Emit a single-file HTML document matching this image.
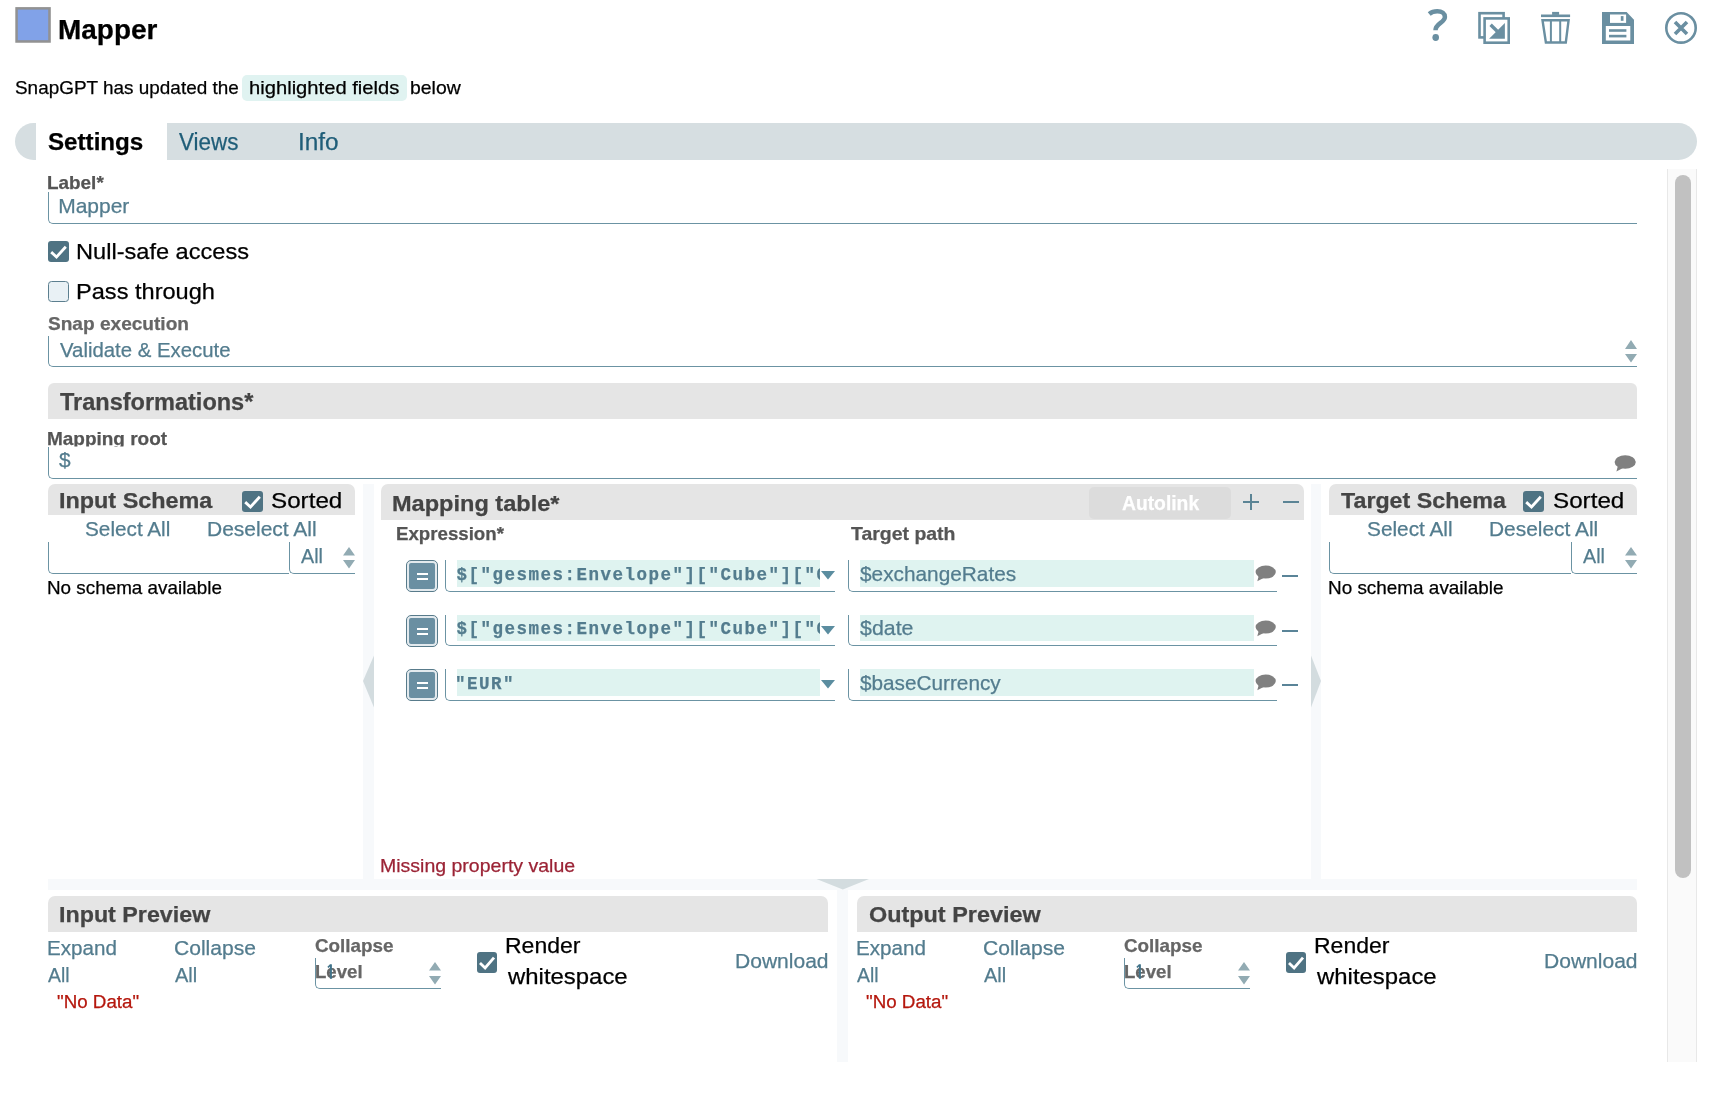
<!DOCTYPE html>
<html lang="en"><head><meta charset="utf-8"><title>Mapper</title>
<style>
html,body{margin:0;padding:0;}
body{width:1714px;height:1104px;position:relative;overflow:hidden;background:#fff;font-family:"Liberation Sans",sans-serif;color:#000;}
#app{position:absolute;left:0;top:0;width:1714px;height:1104px;will-change:transform;}
.a{position:absolute;box-sizing:border-box;}
.t{position:absolute;white-space:nowrap;font-family:"Liberation Sans",sans-serif;transform-origin:0 0;-webkit-text-stroke:0.25px;}
.bar{background:#e5e5e5;}
.inp{border-left:1px solid #6b93a3;border-bottom:1px solid #6b93a3;border-bottom-left-radius:5px;}
.hl{background:#dff3f0;}
.gut{background:#f7f9fb;}
.cb{background:#4f7383;border-radius:3px;}
.cbo{background:#e9f1f5;border:1px solid #5c7f8f;border-radius:3.5px;}
.mono{font-family:"Liberation Mono",monospace;font-weight:700;font-size:20px;line-height:20px;color:#5b8294;white-space:pre;overflow:hidden;}
.eq{border:1px solid #587b8b;border-radius:5px;background:#e3eaee;}
.eq i{position:absolute;left:2px;top:2px;right:2px;bottom:2px;background:#6a8fa2;border-radius:2px;}
.eq b{position:absolute;left:10px;width:11px;height:2px;background:#fff;}
svg{position:absolute;overflow:visible;}

</style></head>
<body>
<div id="app">
<!-- header -->
<svg style="left:10px;top:2px" width="50" height="46" viewBox="10 2 50 46"><rect x="15.3" y="7.1" width="35.5" height="35.65" fill="#929292"/><rect x="17.8" y="9.6" width="30.4" height="30.6" fill="#81a2e8"/></svg>
<!-- header icons -->
<svg style="left:1420px;top:0" width="290" height="52" viewBox="1420 0 290 52">
  <g fill="none" stroke="#6a8fa1">
    <path d="M1429.2 13.9 C1431.6 11.9 1434.5 11.2 1437.3 11.2 C1442 11.2 1444.9 13.6 1444.9 16.9 C1444.9 22.6 1435.5 23.4 1435.5 30.3" stroke-width="4.5"/>
    <rect x="1479.5" y="13.2" width="24.1" height="24.2" stroke-width="2.6"/>
    <rect x="1484.6" y="18.4" width="24.1" height="24.3" stroke-width="2.6" fill="#fff"/>
    <path d="M1490.6 24.8 L1499 33" stroke-width="3.4"/>
    <path d="M1541 15.8 H1570.1" stroke-width="2.6"/>
    <path d="M1542.5 20.2 L1545.9 42.5 H1565.8 L1568.6 20.2 Z" stroke-width="2.4"/>
    <path d="M1550.9 20 V42.5 M1560.2 20 V42.5" stroke-width="2"/>
    <circle cx="1681" cy="27.9" r="14.7" stroke-width="2.6"/>
    <path d="M1675 22 L1687 34 M1687 22 L1675 34" stroke-width="3.6"/>
  </g>
  <g fill="#6a8fa1">
    <ellipse cx="1435.7" cy="37.5" rx="3.3" ry="3.45"/>
    <path d="M1504.9 23 V38.7 H1489.1 Z"/>
    <rect x="1552.1" y="11.9" width="7" height="3"/>
    <path d="M1602 11.9 H1626.6 L1634 19.8 V43.9 H1602 Z"/>
  </g>
  <rect x="1610" y="14.5" width="16.1" height="8.4" fill="#fff"/>
  <rect x="1620.8" y="16.1" width="2.7" height="4.7" fill="#6a8fa1"/>
  <rect x="1605.8" y="26" width="24.5" height="14.5" fill="#fff"/>
  <rect x="1609" y="29.2" width="17.4" height="2.6" fill="#6a8fa1"/>
  <rect x="1609" y="34.8" width="17.4" height="2.6" fill="#6a8fa1"/>
</svg>
<!-- highlighted pill -->
<div class="a" style="left:242px;top:75px;width:165px;height:26px;background:#e0f3f1;border-radius:5px;"></div>
<!-- tab bar -->
<div class="a" style="left:15px;top:123px;width:1682px;height:37px;background:#d6dee1;border-radius:18.5px;"></div>
<div class="a" style="left:36px;top:123px;width:131px;height:37px;background:#fff;"></div>
<!-- scrollbar -->
<div class="a" style="left:1667px;top:169px;width:30px;height:893px;background:#fafafa;border-left:1.5px solid #e8e8e8;border-right:1.5px solid #e8e8e8;"></div>
<div class="a" style="left:1675px;top:175px;width:16px;height:703px;background:#c1c1c1;border-radius:8px;"></div>
<!-- Label input -->
<div class="a inp" style="left:48px;top:192px;width:1589px;height:32px;"></div>
<!-- checkboxes -->
<div class="a cb" style="left:48px;top:241px;width:21px;height:21px;"></div>
<svg style="left:48px;top:241px" width="21" height="21"><path d="M3.2 11.1 L8.5 16 L17.8 5.7" fill="none" stroke="#fff" stroke-width="2.8"/></svg>
<div class="a cbo" style="left:48px;top:281px;width:21px;height:21px;"></div>
<!-- snap execution select -->
<div class="a inp" style="left:48px;top:336px;width:1589px;height:31px;"></div>
<svg style="left:1625px;top:340px" width="12" height="23"><path d="M0 9 L6 0 L12 9 Z M0 14 H12 L6 22.4 Z" fill="#92abb3"/></svg>
<!-- transformations bar -->
<div class="a bar" style="left:48px;top:383px;width:1589px;height:36px;border-radius:6px 6px 0 0;"></div>
<!-- mapping root -->
<div class="a inp" style="left:48px;top:447px;width:1589px;height:32px;"></div>
<svg style="left:1614px;top:455px" width="22" height="17" viewBox="0 0 22 17"><ellipse cx="11.2" cy="7" rx="10.6" ry="6.8" fill="#808080"/><path d="M4 10.5 L2.4 16.6 L10 12.6 Z" fill="#808080"/></svg>
<!-- gutters -->
<div class="a gut" style="left:363px;top:484px;width:11px;height:395px;"></div>
<div class="a gut" style="left:1311px;top:484px;width:10px;height:395px;"></div>
<div class="a gut" style="left:48px;top:879px;width:1589px;height:11px;"></div>
<div class="a gut" style="left:837px;top:889px;width:11px;height:173px;"></div>
<svg style="left:363px;top:655px" width="11" height="53"><path d="M11 0.5 L0 26 L11 52.5 Z" fill="#d3dcdf"/></svg>
<svg style="left:1311px;top:655px" width="10" height="53"><path d="M0 0.5 L10 26 L0 52.5 Z" fill="#d3dcdf"/></svg>
<svg style="left:816px;top:879px" width="54" height="11"><path d="M0.5 0 L26.8 10.6 L53 0 Z" fill="#d3dcdf"/></svg>
<!-- input schema -->
<div class="a bar" style="left:48px;top:484px;width:307px;height:31px;border-radius:7px 7px 0 0;"></div>
<div class="a cb" style="left:242px;top:491px;width:21px;height:21px;"></div>
<svg style="left:242px;top:491px" width="21" height="21"><path d="M3.2 11.1 L8.5 16 L17.8 5.7" fill="none" stroke="#fff" stroke-width="2.8"/></svg>
<div class="a inp" style="left:48px;top:542px;width:241px;height:32px;"></div>
<div class="a inp" style="left:289px;top:542px;width:66px;height:32px;"></div>
<svg style="left:343px;top:547px" width="12" height="23"><path d="M0 8.6 L6 0 L12 8.6 Z M0 13 H12 L6 21.6 Z" fill="#92abb3"/></svg>
<!-- target schema -->
<div class="a bar" style="left:1329px;top:484px;width:308px;height:31px;border-radius:7px 7px 0 0;"></div>
<div class="a cb" style="left:1523px;top:491px;width:21px;height:21px;"></div>
<svg style="left:1523px;top:491px" width="21" height="21"><path d="M3.2 11.1 L8.5 16 L17.8 5.7" fill="none" stroke="#fff" stroke-width="2.8"/></svg>
<div class="a inp" style="left:1329px;top:542px;width:242px;height:32px;"></div>
<div class="a inp" style="left:1571px;top:542px;width:66px;height:32px;"></div>
<svg style="left:1625px;top:547px" width="12" height="23"><path d="M0 8.6 L6 0 L12 8.6 Z M0 13 H12 L6 21.6 Z" fill="#92abb3"/></svg>
<!-- mapping table header -->
<div class="a bar" style="left:381px;top:484px;width:923px;height:36px;border-radius:7px 7px 0 0;"></div>
<div class="a" style="left:1089px;top:487px;width:142px;height:32px;background:#dcdcdc;border-radius:5px;"></div>
<svg style="left:1240px;top:490px" width="62" height="24"><path d="M3 12 H19 M11 4 V20 M43 12 H59" fill="none" stroke="#5b8495" stroke-width="2"/></svg>
<!-- mapping rows -->
<div class="a eq" style="left:406px;top:560px;width:32px;height:32px;"><i></i><b style="top:12.4px"></b><b style="top:17px"></b></div>
<div class="a inp" style="left:445px;top:560px;width:390px;height:32px;"></div>
<div class="a hl" style="left:457px;top:560px;width:363px;height:27px;"></div>
<svg style="left:821px;top:571.2px" width="14" height="9"><path d="M0 0 H14 L7 8.6 Z" fill="#5b8da0"/></svg>
<div class="a inp" style="left:848px;top:560px;width:429px;height:32px;"></div>
<div class="a hl" style="left:860px;top:560px;width:394px;height:27px;"></div>
<svg style="left:1255px;top:565px" width="21" height="17" viewBox="0 0 22 17"><ellipse cx="11.2" cy="7" rx="10.6" ry="6.8" fill="#808080"/><path d="M4 10.5 L2.4 16.6 L10 12.6 Z" fill="#808080"/></svg>
<div class="a" style="left:1282px;top:575px;width:16px;height:2px;background:#5a8498;"></div>
<div class="a eq" style="left:406px;top:614.5px;width:32px;height:32px;"><i></i><b style="top:12.4px"></b><b style="top:17px"></b></div>
<div class="a inp" style="left:445px;top:615px;width:390px;height:31px;"></div>
<div class="a hl" style="left:457px;top:615px;width:363px;height:26px;"></div>
<svg style="left:821px;top:626.2px" width="14" height="9"><path d="M0 0 H14 L7 8.6 Z" fill="#5b8da0"/></svg>
<div class="a inp" style="left:848px;top:615px;width:429px;height:31px;"></div>
<div class="a hl" style="left:860px;top:615px;width:394px;height:26px;"></div>
<svg style="left:1255px;top:620px" width="21" height="17" viewBox="0 0 22 17"><ellipse cx="11.2" cy="7" rx="10.6" ry="6.8" fill="#808080"/><path d="M4 10.5 L2.4 16.6 L10 12.6 Z" fill="#808080"/></svg>
<div class="a" style="left:1282px;top:630px;width:16px;height:2px;background:#5a8498;"></div>
<div class="a eq" style="left:406px;top:669px;width:32px;height:32px;"><i></i><b style="top:12.4px"></b><b style="top:17px"></b></div>
<div class="a inp" style="left:445px;top:669px;width:390px;height:32px;"></div>
<div class="a hl" style="left:457px;top:669px;width:363px;height:27px;"></div>
<svg style="left:821px;top:680.2px" width="14" height="9"><path d="M0 0 H14 L7 8.6 Z" fill="#5b8da0"/></svg>
<div class="a inp" style="left:848px;top:669px;width:429px;height:32px;"></div>
<div class="a hl" style="left:860px;top:669px;width:394px;height:27px;"></div>
<svg style="left:1255px;top:674px" width="21" height="17" viewBox="0 0 22 17"><ellipse cx="11.2" cy="7" rx="10.6" ry="6.8" fill="#808080"/><path d="M4 10.5 L2.4 16.6 L10 12.6 Z" fill="#808080"/></svg>
<div class="a" style="left:1282px;top:684px;width:16px;height:2px;background:#5a8498;"></div>
<!-- previews -->
<div class="a bar" style="left:48px;top:896px;width:780px;height:36px;border-radius:7px 7px 0 0;"></div>
<div class="a inp" style="left:315px;top:958px;width:126px;height:31px;"></div>
<svg style="left:429px;top:962px" width="12" height="23"><path d="M0 8.6 L6 0 L12 8.6 Z M0 14 H12 L6 22.4 Z" fill="#92abb3"/></svg>
<div class="a cb" style="left:477px;top:952px;width:20px;height:21px;"></div>
<svg style="left:477px;top:952px" width="20" height="21"><path d="M3 11.1 L8.1 16 L17 5.7" fill="none" stroke="#fff" stroke-width="2.8"/></svg>
<div class="a bar" style="left:857px;top:896px;width:780px;height:36px;border-radius:7px 7px 0 0;"></div>
<div class="a inp" style="left:1124px;top:958px;width:126px;height:31px;"></div>
<svg style="left:1238px;top:962px" width="12" height="23"><path d="M0 8.6 L6 0 L12 8.6 Z M0 14 H12 L6 22.4 Z" fill="#92abb3"/></svg>
<div class="a cb" style="left:1286px;top:952px;width:20px;height:21px;"></div>
<svg style="left:1286px;top:952px" width="20" height="21"><path d="M3 11.1 L8.1 16 L17 5.7" fill="none" stroke="#fff" stroke-width="2.8"/></svg>

<span class="t" style="left:58.45px;top:13px;font-size:27.5px;line-height:33px;transform:scaleX(1.017);font-weight:700;">Mapper</span>
<span class="t" style="left:14.61px;top:76px;font-size:19.0px;line-height:23px;transform:scaleX(0.996);">SnapGPT has updated the</span>
<span class="t" style="left:249.34px;top:76px;font-size:19.0px;line-height:23px;transform:scaleX(1.062);">highlighted fields</span>
<span class="t" style="left:410.39px;top:76px;font-size:19.0px;line-height:23px;transform:scaleX(1.021);">below</span>
<span class="t" style="left:48.42px;top:128px;font-size:23.5px;line-height:29px;transform:scaleX(1.028);font-weight:700;">Settings</span>
<span class="t" style="left:179.20px;top:128px;font-size:23.5px;line-height:29px;transform:scaleX(0.956);color:#1f5d78;">Views</span>
<span class="t" style="left:297.69px;top:128px;font-size:23.5px;line-height:29px;transform:scaleX(1.038);color:#1f5d78;">Info</span>
<span class="t" style="left:47.32px;top:171px;font-size:19.0px;line-height:23px;transform:scaleX(0.995);font-weight:700;color:#555;">Label*</span>
<span class="t" style="left:58.16px;top:193px;font-size:21.0px;line-height:26px;color:#537c8e;">Mapper</span>
<span class="t" style="left:76.46px;top:238px;font-size:22.0px;line-height:27px;transform:scaleX(1.072);">Null-safe access</span>
<span class="t" style="left:76.46px;top:278px;font-size:22.0px;line-height:27px;transform:scaleX(1.072);">Pass through</span>
<span class="t" style="left:47.90px;top:312px;font-size:18.5px;line-height:23px;transform:scaleX(1.031);font-weight:700;color:#666;">Snap execution</span>
<span class="t" style="left:59.60px;top:337px;font-size:20.5px;line-height:25px;transform:scaleX(0.993);color:#537c8e;">Validate &amp; Execute</span>
<span class="t" style="left:59.90px;top:388px;font-size:23.0px;line-height:28px;transform:scaleX(1.022);font-weight:700;color:#444;">Transformations*</span>
<span class="t" style="left:47.01px;top:427px;font-size:18.5px;line-height:23px;transform:scaleX(1.025);font-weight:700;color:#555;clip-path:inset(0 0 3.40px 0);">Mapping root</span>
<span class="t" style="left:59.40px;top:447px;font-size:20.5px;line-height:25px;transform:scaleX(1.017);color:#537c8e;">$</span>
<span class="t" style="left:58.94px;top:487px;font-size:22.0px;line-height:27px;transform:scaleX(1.063);font-weight:700;color:#444;">Input Schema</span>
<span class="t" style="left:271.44px;top:487px;font-size:22.0px;line-height:27px;transform:scaleX(1.1);">Sorted</span>
<span class="t" style="left:85.35px;top:516px;font-size:20.5px;line-height:25px;transform:scaleX(1.012);color:#537c8e;">Select All</span>
<span class="t" style="left:207.46px;top:516px;font-size:20.5px;line-height:25px;transform:scaleX(1.024);color:#537c8e;">Deselect All</span>
<span class="t" style="left:301.40px;top:543px;font-size:21.0px;line-height:26px;transform:scaleX(0.938);color:#537c8e;">All</span>
<span class="t" style="left:46.73px;top:576px;font-size:19.0px;line-height:23px;transform:scaleX(0.992);">No schema available</span>
<span class="t" style="left:391.83px;top:490px;font-size:22.5px;line-height:27px;transform:scaleX(1.047);font-weight:700;color:#444;">Mapping table*</span>
<span class="t" style="left:396.13px;top:522px;font-size:18.5px;line-height:23px;transform:scaleX(1.009);font-weight:700;color:#555;">Expression*</span>
<span class="t" style="left:850.90px;top:522px;font-size:18.5px;line-height:23px;transform:scaleX(1.051);font-weight:700;color:#555;">Target path</span>
<span class="t" style="left:1121.60px;top:491px;font-size:20.0px;line-height:24px;transform:scaleX(0.964);font-weight:700;color:#fff;">Autolink</span>
<span class="t" style="left:860.30px;top:561px;font-size:21.0px;line-height:26px;transform:scaleX(0.991);color:#537c8e;">$exchangeRates</span>
<span class="t" style="left:860.30px;top:615px;font-size:21.0px;line-height:26px;transform:scaleX(1.017);color:#537c8e;">$date</span>
<span class="t" style="left:860.30px;top:670px;font-size:21.0px;line-height:26px;transform:scaleX(0.988);color:#537c8e;">$baseCurrency</span>
<span class="t" style="left:456.45px;top:565px;font-size:17.5px;line-height:21px;letter-spacing:1.5px;font-weight:700;color:#537c8e;font-family:'Liberation Mono', monospace;clip-path:inset(0 164.53px 0 0);">$[&quot;gesmes:Envelope&quot;][&quot;Cube&quot;][&quot;Cube&quot;][&quot;Cube&quot;]</span>
<span class="t" style="left:456.45px;top:619px;font-size:17.5px;line-height:21px;letter-spacing:1.5px;font-weight:700;color:#537c8e;font-family:'Liberation Mono', monospace;clip-path:inset(0 176.53px 0 0);">$[&quot;gesmes:Envelope&quot;][&quot;Cube&quot;][&quot;Cube&quot;][&quot;@time&quot;]</span>
<span class="t" style="left:455.09px;top:674px;font-size:17.5px;line-height:21px;letter-spacing:1.5px;font-weight:700;color:#537c8e;font-family:'Liberation Mono', monospace;clip-path:inset(0 -304.91px 0 0);">&quot;EUR&quot;</span>
<span class="t" style="left:1341.20px;top:487px;font-size:22.0px;line-height:27px;transform:scaleX(1.056);font-weight:700;color:#444;">Target Schema</span>
<span class="t" style="left:1552.84px;top:487px;font-size:22.0px;line-height:27px;transform:scaleX(1.1);">Sorted</span>
<span class="t" style="left:1366.75px;top:516px;font-size:20.5px;line-height:25px;transform:scaleX(1.015);color:#537c8e;">Select All</span>
<span class="t" style="left:1489.27px;top:516px;font-size:20.5px;line-height:25px;transform:scaleX(1.02);color:#537c8e;">Deselect All</span>
<span class="t" style="left:1583.20px;top:543px;font-size:21.0px;line-height:26px;transform:scaleX(0.938);color:#537c8e;">All</span>
<span class="t" style="left:1328.12px;top:576px;font-size:19.0px;line-height:23px;transform:scaleX(0.995);">No schema available</span>
<span class="t" style="left:379.58px;top:854px;font-size:18.5px;line-height:23px;transform:scaleX(1.054);color:#9b2335;">Missing property value</span>
<span class="t" style="left:58.95px;top:901px;font-size:22.5px;line-height:27px;transform:scaleX(1.034);font-weight:700;color:#444;">Input Preview</span>
<span class="t" style="left:46.59px;top:935px;font-size:20.5px;line-height:25px;transform:scaleX(1.006);color:#537c8e;">Expand</span>
<span class="t" style="left:48.20px;top:962px;font-size:20.5px;line-height:25px;transform:scaleX(0.947);color:#537c8e;">All</span>
<span class="t" style="left:174.41px;top:935px;font-size:20.5px;line-height:25px;transform:scaleX(1.027);color:#537c8e;">Collapse</span>
<span class="t" style="left:175.40px;top:962px;font-size:20.5px;line-height:25px;transform:scaleX(0.975);color:#537c8e;">All</span>
<span class="t" style="left:315.11px;top:934px;font-size:18.5px;line-height:23px;transform:scaleX(1.018);font-weight:700;color:#666;">Collapse</span>
<span class="t" style="left:314.84px;top:960px;font-size:18.5px;line-height:23px;transform:scaleX(1.005);font-weight:700;color:#666;">Level</span>
<span class="t" style="left:505.40px;top:932px;font-size:22.0px;line-height:27px;transform:scaleX(1.045);">Render</span>
<span class="t" style="left:507.57px;top:963px;font-size:22.0px;line-height:27px;transform:scaleX(1.087);">whitespace</span>
<span class="t" style="left:734.96px;top:948px;font-size:20.5px;line-height:25px;transform:scaleX(1.026);color:#537c8e;">Download</span>
<span class="t" style="left:56.91px;top:991px;font-size:18.0px;line-height:22px;transform:scaleX(1.042);color:#b5180e;">&quot;No Data&quot;</span>
<span class="t" style="left:868.67px;top:901px;font-size:22.5px;line-height:27px;transform:scaleX(1.04);font-weight:700;color:#444;">Output Preview</span>
<span class="t" style="left:855.59px;top:935px;font-size:20.5px;line-height:25px;transform:scaleX(1.006);color:#537c8e;">Expand</span>
<span class="t" style="left:857.20px;top:962px;font-size:20.5px;line-height:25px;transform:scaleX(0.947);color:#537c8e;">All</span>
<span class="t" style="left:983.41px;top:935px;font-size:20.5px;line-height:25px;transform:scaleX(1.027);color:#537c8e;">Collapse</span>
<span class="t" style="left:984.40px;top:962px;font-size:20.5px;line-height:25px;transform:scaleX(0.975);color:#537c8e;">All</span>
<span class="t" style="left:1124.11px;top:934px;font-size:18.5px;line-height:23px;transform:scaleX(1.018);font-weight:700;color:#666;">Collapse</span>
<span class="t" style="left:1123.84px;top:960px;font-size:18.5px;line-height:23px;transform:scaleX(1.005);font-weight:700;color:#666;">Level</span>
<span class="t" style="left:1314.40px;top:932px;font-size:22.0px;line-height:27px;transform:scaleX(1.045);">Render</span>
<span class="t" style="left:1316.57px;top:963px;font-size:22.0px;line-height:27px;transform:scaleX(1.087);">whitespace</span>
<span class="t" style="left:1543.96px;top:948px;font-size:20.5px;line-height:25px;transform:scaleX(1.026);color:#537c8e;">Download</span>
<span class="t" style="left:865.91px;top:991px;font-size:18.0px;line-height:22px;transform:scaleX(1.042);color:#b5180e;">&quot;No Data&quot;</span>
<svg style="left:326px;top:962px" width="8" height="19"><path d="M4.9 2.3 V16.8" fill="none" stroke="#41738a" stroke-width="2"/><path d="M1.9 5.4 L4.6 2.9" fill="none" stroke="#41738a" stroke-width="1.5"/></svg><svg style="left:1135px;top:962px" width="8" height="19"><path d="M4.9 2.3 V16.8" fill="none" stroke="#41738a" stroke-width="2"/><path d="M1.9 5.4 L4.6 2.9" fill="none" stroke="#41738a" stroke-width="1.5"/></svg>
</div>
</body></html>
